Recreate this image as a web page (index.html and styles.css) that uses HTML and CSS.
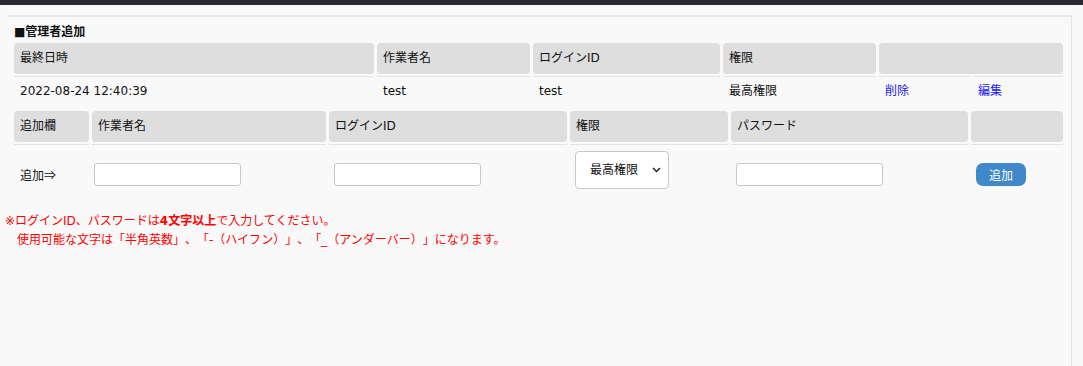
FILE: index.html
```html
<!DOCTYPE html>
<html lang="ja">
<head>
    <meta charset="UTF-8">
    <title>管理者追加</title>
    <link rel="stylesheet" href="styles.css">
</head>
<body>
  <div class="topbar"></div>

  <div class="page">
    <div class="rule"></div>

    <div class="block">
      <div class="title">■管理者追加</div>

      <div class="list list-admin">
        <div class="th">最終日時</div>
        <div class="th">作業者名</div>
        <div class="th">ログインID</div>
        <div class="th">権限</div>
        <div class="th th-wide"></div>

        <div class="td">2022-08-24 12:40:39</div>
        <div class="td">test</div>
        <div class="td">test</div>
        <div class="td">最高権限</div>
        <div class="td td-half"><a href="#" class="link">削除</a></div>
        <div class="td td-half"><a href="#" class="link">編集</a></div>
      </div>

      <div class="list list-add">
        <div class="th">追加欄</div>
        <div class="th">作業者名</div>
        <div class="th">ログインID</div>
        <div class="th">権限</div>
        <div class="th">パスワード</div>
        <div class="th"></div>

        <div class="td add-label">追加<span class="arrow">⇒</span></div>
        <div class="td"><input class="txt txt-first" type="text"></div>
        <div class="td"><input class="txt" type="text"></div>
        <div class="td">
          <div class="sel">
            <span>最高権限</span>
            <svg width="9" height="6" viewBox="0 0 9 6"><path d="M1 1 L4.5 4.5 L8 1" fill="none" stroke="#222" stroke-width="1.5"/></svg>
          </div>
        </div>
        <div class="td"><input class="txt" type="password"></div>
        <div class="td"><button class="btn-add">追加</button></div>
      </div>
    </div>

    <div class="note">
      <p>※ログインID、パスワードは<b>4文字以上</b>で入力してください。</p>
      <p class="indent">使用可能な文字は「半角英数」、「-（ハイフン）」、「_（アンダーバー）」になります。</p>
    </div>
  </div>
</body>
</html>
```

FILE: styles.css
```css
html, body {
    margin: 0;
    height: 100%;
    background-color: #f9f9f9;
    font: 12px "DejaVu Sans", "Noto Sans CJK JP", sans-serif;
    text-spacing-trim: space-all;
    color: #111;
}

.topbar {
    height: 5px;
    background-color: #2b2a31;
}

.page {
    width: 1072px;
    height: 361px;
    border-right: 1px solid #e2e2e2;
    box-sizing: border-box;
}

.rule {
    margin: 10px 0 0 8px;
    height: 2px;
    background-color: #e6e6e6;
}

.block {
    padding: 0 0 0 14px;
    width: 1049px;
}

.title {
    font-weight: bold;
    line-height: 16px;
    margin-top: 7px;
    margin-bottom: 3px;
}

.list {
    display: grid;
    column-gap: 3px;
}

.list-admin {
    grid-template-columns: 360px 153px 187px 153px 91px 90px;
}

.list-add {
    margin-top: 6px;
    grid-template-columns: 75px 234px 238px 158px 237px 1fr;
}

.th {
    background-color: #dedede;
    border-radius: 4px;
    height: 31px;
    line-height: 31px;
    padding-left: 6px;
    margin-bottom: 2px;
}

.th-wide {
    grid-column: span 2;
}

.list .td {
    border-top: 1px solid #e2e2e2;
    padding-left: 6px;
    height: 28px;
    line-height: 28px;
}

.list-admin .td-half:last-child {
    padding-left: 5px;
}

.list-add .td {
    height: 60px;
    padding-left: 5px;
}

.list-add .add-label {
    line-height: 60px;
    padding-left: 6px;
}

.arrow {
    font-family: "Noto Sans CJK JP", sans-serif;
}

.link {
    color: #1a1aee;
    text-decoration: none;
}

.txt {
    margin-top: 18px;
    width: 147px;
    height: 23px;
    box-sizing: border-box;
    border: 1px solid #c8c8c8;
    border-radius: 3px;
    background: #fff;
    outline: none;
}

.txt-first {
    margin-left: -3px;
}

.sel {
    margin-top: 6px;
    width: 94px;
    height: 38px;
    box-sizing: border-box;
    border: 1px solid #c8c8c8;
    border-radius: 4px;
    background: #fff;
    display: flex;
    align-items: center;
    justify-content: space-between;
    padding: 0 7px 0 14px;
}

.btn-add {
    margin-top: 18px;
    width: 50px;
    height: 23px;
    border: 0;
    border-radius: 7px;
    background-color: #3f88c9;
    color: #fff;
    font: 12px "Noto Sans CJK JP", sans-serif;
    padding: 0;
}

.note {
    color: #f00;
    margin-top: 7px;
    padding-left: 5px;
}

.note p {
    margin: 0;
    line-height: 19px;
}

.note .indent {
    padding-left: 12px;
}
```
